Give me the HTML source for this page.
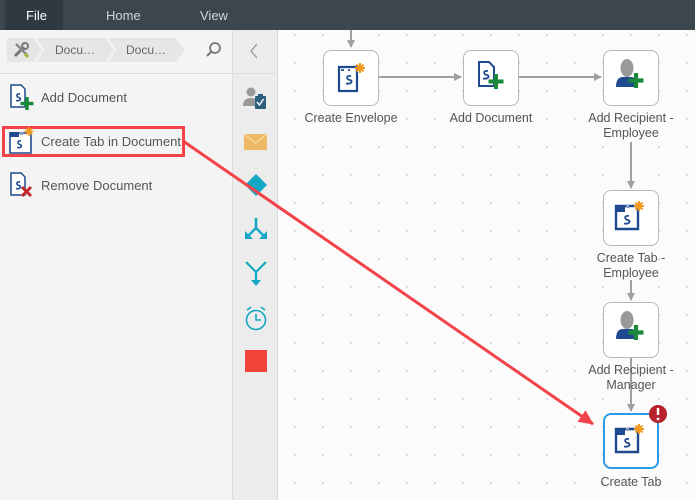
<!DOCTYPE html>
<html><head><meta charset="utf-8"><style>
*{margin:0;padding:0;box-sizing:border-box}
body{width:695px;height:500px;overflow:hidden;font-family:"Liberation Sans",sans-serif;background:#fafafa;position:relative}
.top{position:absolute;left:0;top:0;width:695px;height:30px;background:#3b464d;color:#d0d5d8;font-size:13px}
.top span{position:absolute;top:8px}
.file{position:absolute;left:5px;top:0;width:58px;height:30px;background:#2f393f}
.left{position:absolute;left:0;top:30px;width:233px;height:470px;background:#f4f4f4;border-right:1px solid #ddd}
.crumb{position:absolute;left:7px;top:8px;width:178px;height:24px;background:#e6e6e6;font-size:12px;color:#666}
.sep{position:absolute;left:0;top:43px;width:233px;height:1px;background:#dcdcdc}
.item{position:absolute;left:41px;font-size:13px;color:#555}
.tools{position:absolute;left:233px;top:30px;width:45px;height:470px;background:#ececec;border-right:1px solid #d8d8d8}
.canvas{position:absolute;left:279px;top:30px;width:416px;height:470px;background-color:#fbfbfb;background-image:linear-gradient(#fbfbfb,#fbfbfb),linear-gradient(#d4d4d4,#d4d4d4);background-size:28px 28px;background-position:0 0,0 0;background-repeat:repeat}
.canvas{background-image:radial-gradient(circle at 1px 1px,#d0d0d0 0.9px,transparent 1px);background-size:28px 28px;background-position:15px 4px}
.node{position:absolute;width:56px;height:56px;background:#fff;border:1px solid #b8b8b8;border-radius:8px}
.lbl{position:absolute;font-size:12.5px;color:#555;text-align:center;line-height:15px;width:120px}
</style></head><body>
<div class="top"><div class="file"></div><span style="left:26px;color:#fff">File</span><span style="left:106px">Home</span><span style="left:200px">View</span></div>
<div class="left">
 <div class="crumb">
  <svg style="position:absolute;left:5px;top:3px" width="20" height="18" viewBox="0 0 20 18"><path d="M3 15 L12 6" stroke="#777" stroke-width="3"/><path d="M4 3 L15 14" stroke="#888" stroke-width="2.5"/><path d="M13 13 l3 3" stroke="#9b3" stroke-width="3"/><circle cx="13" cy="5" r="3" fill="none" stroke="#777" stroke-width="2"/></svg>
  <svg style="position:absolute;left:28px;top:0" width="150" height="24"><path d="M0 0 L8 12 L0 24" fill="none" stroke="#f4f4f4" stroke-width="2"/><path d="M72 0 L80 12 L72 24" fill="none" stroke="#f4f4f4" stroke-width="2"/><path d="M141 0 L150 12 L141 24 L150 24 L150 0Z" fill="#f4f4f4"/></svg>
  <span style="position:absolute;left:48px;top:5px">Docu…</span><span style="position:absolute;left:119px;top:5px">Docu…</span>
 </div>
 <svg style="position:absolute;left:205px;top:11px" width="18" height="18"><circle cx="10" cy="7" r="5" fill="none" stroke="#777" stroke-width="1.8"/><path d="M6.5 10.5 L2 15" stroke="#777" stroke-width="2"/></svg>
 <div class="sep"></div>
 <svg style="position:absolute;left:8px;top:53px" width="28" height="28"><path d="M3 2 H13 L17 6 V24 H3Z" fill="#fff" stroke="#1f4a8f" stroke-width="1.5"/><path d="M12 11 c-4 -1 -4 3 -1 3.5 c3 1 1 4 -3 3" stroke="#1f4a8f" stroke-width="1.6" fill="none"/><path d="M19 14 V27 M12.5 20.5 H25.5" stroke="#1a8a3a" stroke-width="3.5"/></svg>
 <span class="item" style="top:60px">Add Document</span>
 <div style="position:absolute;left:2px;top:96px;width:183px;height:31px;border:3px solid #f2434a"></div>
 <svg style="position:absolute;left:8px;top:97px" width="28" height="28"><path d="M2 6 H23 V26 H2Z" fill="#fff" stroke="#1f4a8f" stroke-width="1.6"/><rect x="2" y="5" width="9" height="5" fill="#1f4a8f"/><rect x="12" y="5" width="3" height="3" fill="#8aa0c8"/><path d="M13 14 c-4 -1 -4 3 -1 3.5 c3 1 1 4 -3 3" stroke="#1f4a8f" stroke-width="1.6" fill="none"/><path d="M21 0 V9 M16.5 4.5 H25.5 M18 1.5 L24 7.5 M24 1.5 L18 7.5" stroke="#f39a1d" stroke-width="1.6"/></svg>
 <span class="item" style="top:104px">Create Tab in Document</span>
 <svg style="position:absolute;left:8px;top:141px" width="28" height="28"><path d="M3 2 H13 L17 6 V24 H3Z" fill="#fff" stroke="#1f4a8f" stroke-width="1.5"/><path d="M12 11 c-4 -1 -4 3 -1 3.5 c3 1 1 4 -3 3" stroke="#1f4a8f" stroke-width="1.6" fill="none"/><path d="M14 16 L23 25 M23 16 L14 25" stroke="#c2272d" stroke-width="3"/></svg>
 <span class="item" style="top:148px">Remove Document</span>
</div>
<div class="tools">
 <svg style="position:absolute;left:14px;top:12px" width="16" height="18"><path d="M10 2 L4 9 L10 16" fill="none" stroke="#999" stroke-width="1.3"/></svg>
 <div style="position:absolute;left:0;top:43px;width:45px;height:1px;background:#dcdcdc"></div>
 <svg style="position:absolute;left:10px;top:56px" width="26" height="26"><circle cx="8" cy="6" r="4.5" fill="#999"/><path d="M0 20 Q0 12 8 12 Q13 12 14 15 V20Z" fill="#999"/><rect x="12" y="10" width="11" height="13" rx="1" fill="#2e5e7e"/><rect x="15" y="8" width="5" height="3" fill="#2e5e7e"/><path d="M14 16 l2.5 3 l4 -6" stroke="#fff" stroke-width="1.4" fill="none"/></svg>
 <svg style="position:absolute;left:11px;top:104px" width="24" height="18"><rect x="0" y="0" width="23" height="16" fill="#eeb864"/><path d="M0 0 L11.5 9 L23 0" fill="none" stroke="#f6d9a8" stroke-width="1.3"/></svg>
 <svg style="position:absolute;left:12px;top:144px" width="24" height="24"><path d="M11 0 L22 11 L11 22 L0 11Z" fill="#14a8c4"/></svg>
 <svg style="position:absolute;left:11px;top:188px" width="26" height="26"><path d="M12 0 V10 L4 18 M12 10 L20 18" stroke="#14a8c4" stroke-width="2.5" fill="none"/><path d="M1 13 V21 H9Z M23 13 V21 H15Z" fill="#14a8c4"/></svg>
 <svg style="position:absolute;left:11px;top:230px" width="26" height="30"><path d="M2 2 L12 12 L22 2 M12 12 V21" stroke="#14a8c4" stroke-width="2.2" fill="none"/><path d="M7 20 H17 L12 26Z" fill="#14a8c4"/></svg>
 <svg style="position:absolute;left:11px;top:275px" width="26" height="28"><circle cx="12" cy="15" r="9.5" fill="none" stroke="#14a8c4" stroke-width="1.6"/><path d="M12 9 V15 H17 M3 5 L7 2 M21 5 L17 2" stroke="#14a8c4" stroke-width="1.6" fill="none"/></svg>
 <div style="position:absolute;left:12px;top:320px;width:22px;height:22px;background:#f0443a"></div>
</div>
<div class="canvas"></div>
<svg style="position:absolute;left:0;top:0" width="695" height="500">
 <defs><marker id="a" markerWidth="8" markerHeight="8" refX="7" refY="4" orient="auto" markerUnits="userSpaceOnUse"><path d="M0 0 L8 4 L0 8Z" fill="#a0a0a0"/></marker>
 <marker id="r" markerWidth="16" markerHeight="14" refX="14" refY="7" orient="auto" markerUnits="userSpaceOnUse"><path d="M0 0 L15 7 L0 14Z" fill="#f2434a"/></marker></defs>
 <g stroke="#a0a0a0" stroke-width="2" fill="none">
  <path d="M351 30 V47" marker-end="url(#a)"/>
  <path d="M379 77 H461" marker-end="url(#a)"/>
  <path d="M519 77 H601" marker-end="url(#a)"/>
  <path d="M631 142 V188" marker-end="url(#a)"/>
  <path d="M631 280 V300" marker-end="url(#a)"/>
  <path d="M631 358 V411" marker-end="url(#a)"/>
 </g>
</svg>
<div class="node" style="left:323px;top:50px"></div>
<div class="node" style="left:463px;top:50px"></div>
<div class="node" style="left:603px;top:50px"></div>
<div class="node" style="left:603px;top:190px"></div>
<div class="node" style="left:603px;top:302px"></div>
<div class="node" style="left:603px;top:413px;border:2px solid #2b9be8"></div>
<div class="lbl" style="left:291px;top:111px">Create Envelope</div>
<div class="lbl" style="left:431px;top:111px">Add Document</div>
<div class="lbl" style="left:571px;top:111px">Add Recipient -<br>Employee</div>
<div class="lbl" style="left:571px;top:251px">Create Tab -<br>Employee</div>
<div class="lbl" style="left:571px;top:363px">Add Recipient -<br>Manager</div>
<div class="lbl" style="left:571px;top:475px">Create Tab</div>
<svg style="position:absolute;left:0;top:0" width="695" height="500">
 <defs>
  <g id="env"><path d="M0 4 H18 V28 H0Z" fill="none" stroke="#1f4a8f" stroke-width="2.2"/><path d="M2 7 H5 M9 7 H11" stroke="#1f4a8f" stroke-width="1.8"/><path d="M12 13 c-5 -1 -5 3.5 -1 4 c3.5 1 1 4.5 -4 3.5" stroke="#1f4a8f" stroke-width="1.8" fill="none"/><g stroke="#f39a1d" stroke-width="2"><path d="M21 0 V10 M16 5 H26 M17.5 1.5 L24.5 8.5 M24.5 1.5 L17.5 8.5"/></g></g>
  <g id="tab"><path d="M0 5 H22 V28 H0Z" fill="none" stroke="#1f4a8f" stroke-width="2.4"/><rect x="0" y="4" width="9" height="7" fill="#1f4a8f"/><rect x="10" y="4" width="3" height="3" fill="#8aa0c8"/><path d="M13 15 c-5 -1 -5 3.5 -1 4 c3.5 1 1 4.5 -4 3.5" stroke="#1f4a8f" stroke-width="1.8" fill="none"/><g stroke="#f39a1d" stroke-width="2"><path d="M23 0 V10 M18 5 H28 M19.5 1.5 L26.5 8.5 M26.5 1.5 L19.5 8.5"/></g></g>
  <g id="rec"><ellipse cx="11" cy="8" rx="6.5" ry="9" fill="#9a9a9a"/><path d="M0 27 Q0 17 7 17 H15 Q19 17 22 22 V27Z" fill="#1f4a8f"/><path d="M20 13 V28 M12.5 20.5 H27.5" stroke="#1a8a3a" stroke-width="4.2"/></g>
 </defs>
 <use href="#env" x="339" y="63"/>
 <g transform="translate(476,60)"><path d="M3 2 H13 L18 7 V26 H3Z" fill="#fff" stroke="#1f4a8f" stroke-width="2"/><path d="M12 11 c-5 -1 -5 3.5 -1 4 c3.5 1 1 4.5 -4 3.5" stroke="#1f4a8f" stroke-width="1.8" fill="none"/><path d="M20 14 V29 M12.5 21.5 H27.5" stroke="#1a8a3a" stroke-width="4"/></g>
 <use href="#rec" x="616" y="60"/>
 <use href="#tab" x="616" y="201"/>
 <use href="#rec" x="616" y="312"/>
 <use href="#tab" x="616" y="424"/>
 <circle cx="658" cy="414" r="9" fill="#b5222c"/><path d="M658 408 V415" stroke="#fff" stroke-width="2.4"/><circle cx="658" cy="419" r="1.4" fill="#fff"/>
 <path d="M183 141 L593 424" stroke="#f2434a" stroke-width="3" marker-end="url(#r)"/>
</svg>
</body></html>
